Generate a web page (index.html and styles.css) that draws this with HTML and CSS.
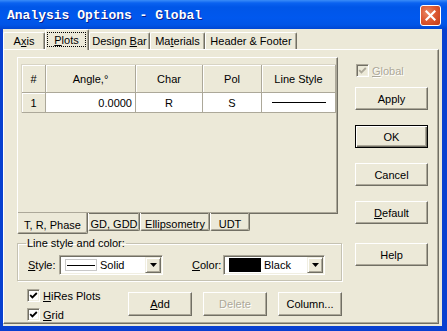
FILE: index.html
```html
<!DOCTYPE html>
<html>
<head>
    <title>Analysis Options - Global</title>
    <link rel="stylesheet" href="styles.css">
</head>
<body>
    <div class="window">
        <div class="titlebar">
            <span class="title">Analysis Options - Global</span>
            <span class="close">
                <svg width="11" height="11" viewBox="0 0 11 11"><path d="M1.5 1.5 L9.5 9.5 M9.5 1.5 L1.5 9.5" stroke="#fff" stroke-width="2.2" stroke-linecap="square"/></svg>
            </span>
        </div>
        <div class="frame">
            <div class="client">
                <div class="tabstrip">
                    <span class="tab tab-axis"><span>A<u>x</u>is</span></span>
                    <span class="tab tab-plots active"><span class="focus"><span><u>P</u>lots</span></span></span>
                    <span class="tab tab-design"><span>Design <u>B</u>ar</span></span>
                    <span class="tab tab-materials"><span>Ma<u>t</u>erials</span></span>
                    <span class="tab tab-header"><span>Header &amp; Footer</span></span>
                </div>
                <div class="sheet">
                    <div class="main">
                        <div class="subpanel">
                            <table class="grid">
                                <colgroup>
                                    <col style="width:24px">
                                    <col style="width:90px">
                                    <col style="width:67px">
                                    <col style="width:59px">
                                    <col style="width:74px">
                                </colgroup>
                                <tr class="head">
                                    <td class="hd">#</td>
                                    <td class="hd">Angle,°</td>
                                    <td class="hd">Char</td>
                                    <td class="hd">Pol</td>
                                    <td class="hd">Line Style</td>
                                </tr>
                                <tr class="row">
                                    <td class="hd">1</td>
                                    <td class="num">0.0000</td>
                                    <td>R</td>
                                    <td>S</td>
                                    <td><div class="line"></div></td>
                                </tr>
                            </table>
                        </div>
                        <div class="subtabs">
                            <span class="subtab sub-trp active">T, R, Phase</span>
                            <span class="subtab sub-gd">GD, GDD</span>
                            <span class="subtab sub-ell">Ellipsometry</span>
                            <span class="subtab sub-udt">UDT</span>
                        </div>
                        <fieldset class="group">
                            <legend>Line style and color:</legend>
                            <div class="group-row">
                                <span class="lbl lbl-style"><u>S</u>tyle:</span>
                                <div class="combo combo-style">
                                    <span class="sample"><span class="sample-line"></span></span>
                                    <span class="combo-text">Solid</span>
                                    <span class="drop"><svg width="7" height="4" viewBox="0 0 7 4"><path d="M0 0h7L3.5 4z"/></svg></span>
                                </div>
                                <span class="lbl lbl-color"><u>C</u>olor:</span>
                                <div class="combo combo-color">
                                    <span class="swatch"></span>
                                    <span class="combo-text">Black</span>
                                    <span class="drop"><svg width="7" height="4" viewBox="0 0 7 4"><path d="M0 0h7L3.5 4z"/></svg></span>
                                </div>
                            </div>
                        </fieldset>
                        <div class="bottom">
                            <div class="checks">
                                <label class="checkrow">
                                    <span class="check"><svg width="9" height="9" viewBox="0 0 9 9"><path d="M1.2 4.2 L3.4 6.4 L7.8 2" stroke="#000" stroke-width="1.8" fill="none"/></svg></span>
                                    <span><u>H</u>iRes Plots</span>
                                </label>
                                <label class="checkrow">
                                    <span class="check"><svg width="9" height="9" viewBox="0 0 9 9"><path d="M1.2 4.2 L3.4 6.4 L7.8 2" stroke="#000" stroke-width="1.8" fill="none"/></svg></span>
                                    <span><u>G</u>rid</span>
                                </label>
                            </div>
                            <span class="btn btn-wide"><span><u>A</u>dd</span></span>
                            <span class="btn btn-wide disabled">Delete</span>
                            <span class="btn btn-wide">Column...</span>
                        </div>
                    </div>
                    <div class="side">
                        <label class="checkrow global">
                            <span class="check disabled"><svg width="9" height="9" viewBox="0 0 9 9"><path d="M1.2 4.2 L3.4 6.4 L7.8 2" stroke="#aca899" stroke-width="1.8" fill="none"/></svg></span>
                            <span class="dim"><u>G</u>lobal</span>
                        </label>
                        <span class="btn apply">Apply</span>
                        <span class="btn default">OK</span>
                        <span class="btn">Cancel</span>
                        <span class="btn"><span><u>D</u>efault</span></span>
                        <span class="btn help">Help</span>
                    </div>
                </div>
            </div>
        </div>
    </div>
</body>
</html>
```

FILE: styles.css
```css
body {
    margin: 0;
    font-family: 'Liberation Sans', Arial, sans-serif;
    font-size: 11px;
    color: #000;
    background: #fff;
}
.window {
    width: 447px;
    height: 331px;
    display: flex;
    flex-direction: column;
}
.titlebar {
    height: 29px;
    flex-shrink: 0;
    display: flex;
    align-items: center;
    justify-content: space-between;
    padding: 2px 6px 0 7px;
    box-sizing: border-box;
    background: linear-gradient(to bottom, #3a8cf8 0px, #0a62f0 3px, #0056e8 7px, #0058ee 18px, #0054e6 25px, #0046d2 29px);
}
.title {
    font-family: 'Liberation Mono', 'DejaVu Sans Mono', monospace;
    font-weight: bold;
    font-size: 13px;
    color: #fff;
    text-shadow: 1px 1px #0a1e8c;
}
.close {
    width: 19px;
    height: 19px;
    border: 1px solid #fff;
    border-radius: 3px;
    display: flex;
    align-items: center;
    justify-content: center;
    background: radial-gradient(circle at 35% 35%, #ea8a66 0%, #dd5a33 45%, #c23a16 100%);
}
.frame {
    flex: 1;
    display: flex;
    background: #0a4fde;
    border-left: 3px solid #0840d0;
    border-right: 5px solid #0840d0;
    border-bottom: 5px solid #0840d0;
}
.client {
    flex: 1;
    display: flex;
    flex-direction: column;
    background: #ece9d8;
    padding: 0 3px 2px 0;
}

/* top tabs */
.tabstrip {
    height: 20px;
    display: flex;
    align-items: flex-end;
    position: relative;
    z-index: 1;
}
.tab {
    height: 17px;
    box-sizing: border-box;
    display: flex;
    align-items: center;
    justify-content: center;
    border-top: 1px solid #fff;
    border-left: 1px solid #fff;
    border-right: 1px solid #716f64;
    box-shadow: inset -1px 0 #aca899;
    border-radius: 2px 2px 0 0;
}
.tab.active {
    height: 21px;
    margin-bottom: -1px;
    padding: 2px 2px 3px 1px;
    background: #ece9d8;
}
.focus {
    flex: 1;
    align-self: stretch;
    display: flex;
    align-items: center;
    justify-content: center;
    border: 1px dotted #000;
}
.tab-axis { width: 42px; }
.tab-plots { width: 44px; }
.tab-design { width: 61px; }
.tab-materials { width: 55px; }
.tab-header { width: 92px; }

.sheet {
    flex: 1;
    display: flex;
    gap: 13px;
    padding: 7px 0 0 13px;
    border-top: 1px solid #fff;
    border-left: 1px solid #fff;
    border-right: 1px solid #716f64;
    border-bottom: 1px solid #716f64;
    box-shadow: inset -1px -1px #aca899;
}
.main {
    width: 325px;
    display: flex;
    flex-direction: column;
}

/* inner panel with grid */
.subpanel {
    width: 321px;
    height: 157px;
    box-sizing: border-box;
    padding: 6px 3px;
    border-top: 1px solid #fff;
    border-left: 1px solid #fff;
    border-right: 1px solid #716f64;
    border-bottom: 1px solid #716f64;
    box-shadow: inset -1px -1px #aca899;
}
.grid {
    width: 314px;
    table-layout: fixed;
    border-collapse: separate;
    border-spacing: 0;
    border-top: 1px solid #d8d4c4;
    border-left: 1px solid #d8d4c4;
}
.grid td {
    border-right: 1px solid #aca899;
    border-bottom: 1px solid #aca899;
    text-align: center;
    padding: 0;
    background: #fff;
}
.grid td.hd {
    background: #ece9d8;
    box-shadow: inset 1px 1px #fff;
}
.grid .head td {
    height: 27px;
}
.grid .row td {
    height: 19px;
}
.grid td.num {
    text-align: right;
    padding-right: 3px;
}
.line {
    height: 1px;
    background: #000;
    margin: 0 9px 0 10px;
}

/* bottom aligned tabs */
.subtabs {
    display: flex;
    margin-top: -1px;
    height: 21px;
    align-items: flex-start;
}
.subtab {
    height: 18px;
    box-sizing: border-box;
    display: flex;
    justify-content: center;
    padding-top: 5px;
    border-left: 1px solid #fff;
    border-right: 1px solid #716f64;
    border-bottom: 1px solid #716f64;
    box-shadow: inset -1px -1px #aca899;
    border-radius: 0 0 2px 2px;
}
.subtab.active {
    height: 21px;
    padding-top: 6px;
    background: #ece9d8;
    position: relative;
    z-index: 1;
}
.sub-trp { width: 71px; }
.sub-gd { width: 52px; }
.sub-ell { width: 70px; }
.sub-udt { width: 40px; }

/* group box */
.group {
    margin: 3px 0 0;
    padding: 0 16px 5px 8px;
    border: 1px solid #c5c2b2;
    box-shadow: 1px 1px #fff, inset 1px 1px #fff;
}
.group legend {
    padding: 0 1px;
    margin-left: 0;
    line-height: 13px;
}
.group-row {
    display: flex;
    align-items: center;
    margin-top: 5px;
}
.lbl {
    margin-left: 2px;
    width: 31px;
}
.lbl-color {
    margin-left: 29px;
}
.combo {
    height: 20px;
    box-sizing: border-box;
    display: flex;
    align-items: center;
    background: #fff;
    padding-left: 3px;
    border-top: 1px solid #aca899;
    border-left: 1px solid #aca899;
    border-right: 1px solid #fff;
    border-bottom: 1px solid #fff;
    box-shadow: inset 1px 1px #716f64, inset -1px -1px #f1efe2;
}
.combo-style { width: 104px; }
.combo-color { width: 102px; }
.sample {
    width: 32px;
    height: 12px;
    box-sizing: border-box;
    border: 1px solid #c8c8c8;
    display: flex;
    align-items: center;
    margin-left: 2px;
}
.sample-line {
    flex: 1;
    height: 1px;
    background: #000;
    margin: 0 1px;
}
.swatch {
    width: 32px;
    height: 14px;
    margin-left: 2px;
    background: #000;
}
.combo-text {
    margin-left: 3px;
}
.drop {
    margin-left: auto;
    margin-right: 1px;
    width: 16px;
    height: 16px;
    box-sizing: border-box;
    display: flex;
    align-items: center;
    justify-content: center;
    background: #ece9d8;
    border-top: 1px solid #f1efe2;
    border-left: 1px solid #f1efe2;
    border-right: 1px solid #716f64;
    border-bottom: 1px solid #716f64;
    box-shadow: inset 1px 1px #fff, inset -1px -1px #aca899;
}

/* checkboxes and buttons */
.bottom {
    display: flex;
    align-items: flex-start;
    gap: 11px;
}
.checks {
    padding: 8px 0 0 10px;
    box-sizing: border-box;
    width: 111px;
    margin-right: -11px;
    display: flex;
    flex-direction: column;
    gap: 6px;
}
.checkrow {
    display: flex;
    align-items: center;
    gap: 3px;
    height: 13px;
}
.check {
    width: 13px;
    height: 13px;
    box-sizing: border-box;
    display: flex;
    align-items: center;
    justify-content: center;
    background: #fff;
    border-top: 1px solid #aca899;
    border-left: 1px solid #aca899;
    border-right: 1px solid #fff;
    border-bottom: 1px solid #fff;
    box-shadow: inset 1px 1px #716f64, inset -1px -1px #f1efe2;
}
.check.disabled {
    background: #ece9d8;
}
.dim, .btn.disabled {
    color: #aca899;
    text-shadow: 1px 1px #fff;
}
.btn {
    height: 23px;
    box-sizing: border-box;
    display: flex;
    align-items: center;
    justify-content: center;
    background: #ece9d8;
    border-top: 1px solid #fff;
    border-left: 1px solid #fff;
    border-right: 1px solid #716f64;
    border-bottom: 1px solid #716f64;
    box-shadow: inset -1px -1px #aca899;
}
.btn-wide {
    width: 64px;
    height: 24px;
    margin-top: 11px;
}
.btn.default {
    border: 1px solid #000;
    box-shadow: inset 1px 1px #fff, inset -1px -1px #716f64, inset -2px -2px #aca899;
}
.side {
    width: 73px;
    display: flex;
    flex-direction: column;
}
.global {
    margin: 7px 0 0 1px;
}
.side .btn {
    margin-top: 15px;
}
.side .btn.apply {
    margin-top: 10px;
}
.side .btn.help {
    margin-top: 19px;
}
```
